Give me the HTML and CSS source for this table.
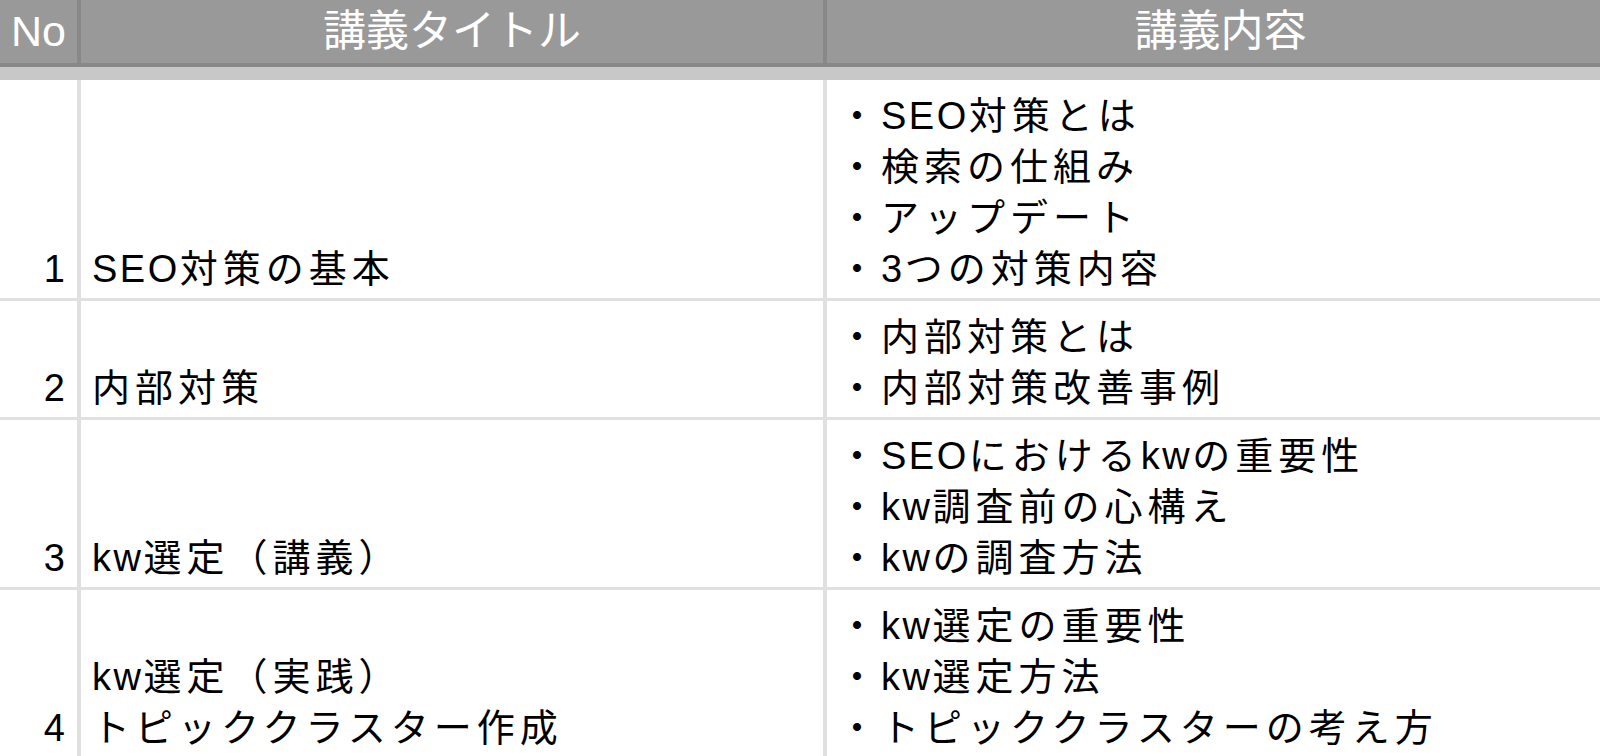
FILE: index.html
```html
<!DOCTYPE html>
<html lang="ja">
<head>
<meta charset="utf-8">
<title>講義一覧</title>
<link rel="stylesheet" href="styles.css">
</head>
<body>
<div class="sheet">
  <div class="head">
    <div class="hcell hno">No</div>
    <div class="hcell">講義タイトル</div>
    <div class="hcell hcontent">講義内容</div>
  </div>
  <div class="band"></div>
  <div class="body">
    <div class="cell no">1</div>
    <div class="cell title"><div class="line"><span class="en">SEO</span>対策の基本</div></div>
    <div class="cell content">
      <div class="line">・<span class="en">SEO</span>対策とは</div>
      <div class="line">・検索の仕組み</div>
      <div class="line">・アップデート</div>
      <div class="line">・<span class="en">3</span>つの対策内容</div>
    </div>

    <div class="cell no">2</div>
    <div class="cell title"><div class="line">内部対策</div></div>
    <div class="cell content">
      <div class="line">・内部対策とは</div>
      <div class="line">・内部対策改善事例</div>
    </div>

    <div class="cell no">3</div>
    <div class="cell title"><div class="line"><span class="en">kw</span>選定（講義）</div></div>
    <div class="cell content">
      <div class="line">・<span class="en">SEO</span>における<span class="en">kw</span>の重要性</div>
      <div class="line">・<span class="en">kw</span>調査前の心構え</div>
      <div class="line">・<span class="en">kw</span>の調査方法</div>
    </div>

    <div class="cell no">4</div>
    <div class="cell title">
      <div class="line"><span class="en">kw</span>選定（実践）</div>
      <div class="line">トピッククラスター作成</div>
    </div>
    <div class="cell content">
      <div class="line">・<span class="en">kw</span>選定の重要性</div>
      <div class="line">・<span class="en">kw</span>選定方法</div>
      <div class="line">・トピッククラスターの考え方</div>
    </div>
  </div>
</div>
</body>
</html>
```

FILE: styles.css
```css
html, body {
  margin: 0;
  padding: 0;
  background: #ffffff;
}

body {
  font-family: "Liberation Sans", "Noto Sans CJK JP", sans-serif;
  color: #000000;
  overflow: hidden;
}

.sheet {
  width: 1600px;
}

.head {
  display: grid;
  grid-template-columns: 77px 742px 1fr;
  column-gap: 4px;
  background: #888888;
  border-bottom: 4px solid #888888;
}

.hcell {
  background: #999999;
  color: #ffffff;
  height: 63px;
  font-size: 43px;
  line-height: 63px;
  text-align: center;
  white-space: nowrap;
}

.hcontent {
  padding-left: 14px;
}

.band {
  height: 13px;
  background: #c8c8c8;
}

.body {
  display: grid;
  grid-template-columns: 77px 742px 1fr;
  column-gap: 4px;
  row-gap: 3px;
  background: #e0e0e0;
}

.cell {
  background: #ffffff;
  font-size: 38px;
  padding: 11px 0 3px;
  display: flex;
  flex-direction: column;
  justify-content: flex-end;
  white-space: nowrap;
}

.line {
  line-height: 51px;
  height: 51px;
}

.no {
  line-height: 51px;
  text-align: right;
  align-items: flex-end;
  padding-right: 12px;
}

.title {
  padding-left: 11px;
  letter-spacing: 5px;
}

.content {
  padding-left: 11px;
  letter-spacing: 5px;
}

.en {
  letter-spacing: 2.5px;
}
```
